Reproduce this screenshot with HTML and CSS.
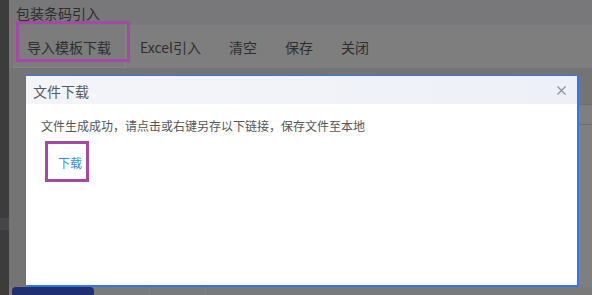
FILE: index.html
```html
<!DOCTYPE html>
<html lang="zh-CN">
<head>
<meta charset="utf-8">
<title>包装条码引入</title>
<link rel="stylesheet" href="styles.css">
</head>
<body>
<div class="app">
  <aside class="sidebar"><div class="sidebar-item"></div></aside>
  <main class="main">
    <div class="page-title">包装条码引入</div>
    <div class="toolbar">
      <button class="tool-btn tool-btn-first">导入模板下载<span class="mark mark-top"></span></button>
      <button class="tool-btn">Excel引入</button>
      <button class="tool-btn">清空</button>
      <button class="tool-btn">保存</button>
      <button class="tool-btn">关闭</button>
    </div>
    <div class="content">
      <div class="grid-lines">
        <div class="grid-row"></div>
        <div class="grid-row"></div>
      </div>
    </div>
    <div class="tabs">
      <div class="tab tab-active"></div>
      <div class="tab"></div>
      <div class="tab"></div>
    </div>
  </main>
</div>

<div class="dialog">
  <div class="dialog-header">
    <span class="dialog-title">文件下载</span>
    <span class="dialog-close">
      <svg width="9" height="9" viewBox="0 0 9 9"><path d="M0.5 0.5L8.5 8.5M8.5 0.5L0.5 8.5" stroke="#8a8f99" stroke-width="1.2" fill="none"/></svg>
    </span>
  </div>
  <div class="dialog-body">
    <p class="dialog-msg">文件生成成功，请点击或右键另存以下链接，保存文件至本地</p>
    <div class="link-box"><a class="dl-link" href="#">下载</a></div>
  </div>
</div>
</body>
</html>
```

FILE: styles.css
```css
* { box-sizing: border-box; }
html, body {
  margin: 0;
  padding: 0;
  width: 592px;
  height: 295px;
  overflow: hidden;
  font-family: "Noto Sans CJK SC", "Noto Sans", sans-serif;
  background: #777779;
}
.app {
  display: flex;
  width: 592px;
  height: 295px;
}
.sidebar {
  width: 9px;
  flex: none;
  background: #3c3c3d;
  padding-top: 218px;
}
.sidebar-item {
  height: 12px;
  background: #46464a;
}
.main {
  flex: 1;
  display: flex;
  flex-direction: column;
  background: #78787b;
}
.page-title {
  height: 25px;
  padding-left: 7px;
  padding-top: 3px;
  font-size: 14px;
  line-height: 20px;
  color: #2c2c2e;
}
.toolbar {
  height: 43px;
  margin-left: 4px;
  display: flex;
  align-items: center;
  background: #7e7e7e;
}
.tool-btn {
  position: relative;
  height: 43px;
  padding: 0 14px;
  border: 0;
  background: transparent;
  font-family: inherit;
  font-size: 14px;
  color: #2e2e2e;
  line-height: 20px;
  padding-top: 1px;
}
.tool-btn-first {
  border-right: 1px solid #878787;
  border-bottom: 1px solid #858585;
  background: #7c7c7c;
}
.mark {
  position: absolute;
  border: 3px solid #a44aa4;
}
.mark-top {
  left: 3px;
  top: -4px;
  width: 114px;
  height: 41px;
}
.content {
  flex: 1;
  background: #747474;
  display: flex;
  justify-content: flex-end;
  padding-top: 36px;
}
.grid-lines {
  width: 14px;
  background: #7f7f7f;
}
.grid-row {
  height: 20px;
  border-top: 1px solid #6e6e6e;
}
.tabs {
  height: 8px;
  display: flex;
  padding-left: 3px;
  background: #7a7a7a;
}
.tab {
  width: 56px;
  border-right: 1px solid #828282;
}
.tab-active {
  width: 82px;
  background: #1f2f70;
  border-radius: 4px 4px 0 0;
  border-right: 0;
}
.dialog {
  position: absolute;
  left: 25px;
  top: 75px;
  width: 554px;
  height: 212px;
  background: #ffffff;
  border-style: solid;
  border-color: #3275f0;
  border-width: 1px 2px 2px 1px;
  border-radius: 2px;
  display: flex;
  flex-direction: column;
}
.dialog-header {
  height: 28px;
  flex: none;
  display: flex;
  align-items: center;
  justify-content: space-between;
  padding: 0 11px 0 7px;
  background: linear-gradient(to right, #f4f5f9, #edf0f8);
}
.dialog-title {
  font-size: 14px;
  color: #555a60;
  line-height: 20px;
  padding-top: 1px;
}
.dialog-close {
  display: flex;
  width: 9px;
  height: 9px;
}
.dialog-body {
  padding: 13px 15px 0 15px;
}
.dialog-msg {
  margin: 0;
  font-size: 12px;
  line-height: 18px;
  color: #555;
}
.link-box {
  display: inline-block;
  margin: 6px 0 0 4px;
  border: 3px solid #a44aa4;
  padding: 10px 4px 7px 10px;
}
.dl-link {
  display: block;
  font-size: 12px;
  line-height: 18px;
  color: #3590dc;
  text-decoration: none;
}
```
